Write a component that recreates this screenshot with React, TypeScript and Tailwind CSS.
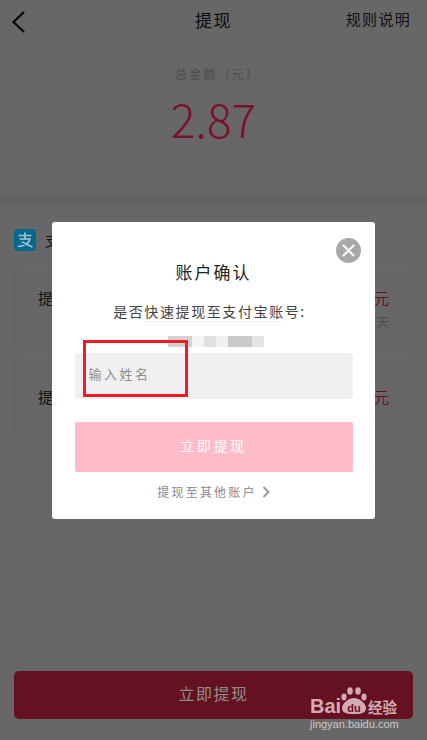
import React from "react";

const cjk = { fontFamily: '"Noto Sans CJK SC", "Noto Sans", sans-serif' };

function Card({ tall }: { tall?: boolean }) {
  return (
    <div className={`flex h-[79px] w-[398px] items-start justify-between rounded-[6px] border border-[#646464] pl-[23px] pr-[22px] ${tall ? "pt-[16px]" : "pt-[27px]"}`}>
      <span className="text-[15px] leading-[20px] text-[#111]">提现</span>
      <div className="flex flex-col items-end">
        <span className="text-[15px] leading-[20px] text-[#6b1024]">元</span>
        {tall && <span className="mt-[6px] text-[12px] leading-[16px] text-[#4a4a4a]">天</span>}
      </div>
    </div>
  );
}

export default function App() {
  return (
    <div className="relative h-[740px] w-[427px] overflow-hidden bg-[#676767]" style={cjk}>
      {/* dimmed page */}
      <div className="flex h-full flex-col">
        <header className="flex h-[44px] items-center justify-between border-b border-[#636363] pb-[4px] pl-[11px] pr-[16px]">
          <svg width="15" height="22" viewBox="0 0 15 22" fill="none" stroke="#050505" strokeWidth="2.2" className="mt-[4px]">
            <path d="M13 1 L2.5 11 L13 21" />
          </svg>
          <h1 className="absolute left-0 right-0 text-center text-[17px] font-normal tracking-[1.5px] text-[#0c0c0c]">提现</h1>
          <span className="text-[15px] tracking-[1.3px] text-[#111]">规则说明</span>
        </header>
        <section className="flex h-[150px] flex-col items-center pt-[22px]">
          <span className="pl-[8px] text-[12px] leading-[16px] tracking-[2.2px] text-[#4c4c4c]">总金额（元）</span>
          <span className="mt-[8px] text-[46px] leading-[56px] font-light text-[#7c1029]">2.87</span>
        </section>
        <div className="h-[12px] bg-[#636363]" />
        <section className="flex flex-1 flex-col pl-[14px] pt-[23px]">
          <div className="flex h-[22px] items-center gap-[9px]">
            <svg width="22" height="22" viewBox="0 0 22 22">
              <rect width="22" height="22" rx="4" fill="#05688f" />
              <path d="M4.5 6.5 H17.5 M11 3.5 V10 M5.5 10 H16 C15 13.5 12 17 4 17.5 M8 13 C11 14 14 16 18.5 18" stroke="#a9c3cf" strokeWidth="1.7" fill="none" />
            </svg>
            <span className="text-[15px] text-[#111]">支付宝</span>
          </div>
          <div className="mt-[20px] flex flex-col gap-[9px]">
            <Card tall />
            <Card />
          </div>
          <button className="mt-auto mb-[21px] flex h-[48px] w-[399px] items-center justify-center rounded-[5px] bg-[#661121] pb-[4px] text-[16px] tracking-[1.5px] text-[#8d8d8d]">
            立即提现
          </button>
        </section>
      </div>

      {/* modal */}
      <div className="absolute left-[52px] top-[222px] flex h-[297px] w-[323px] flex-col items-center rounded-[3px] bg-white px-[22px]">
        <button className="absolute right-[14px] top-[16px] flex h-[25px] w-[25px] items-center justify-center rounded-full bg-[#a8a8a8]">
          <svg width="13" height="13" viewBox="0 0 13 13" stroke="#fff" strokeWidth="2" strokeLinecap="round">
            <path d="M1.5 1.5 L11.5 11.5 M11.5 1.5 L1.5 11.5" />
          </svg>
        </button>
        <h2 className="mt-[38px] text-[17px] font-normal leading-[24px] tracking-[2px] text-[#222]">账户确认</h2>
        <p className="mr-[8px] mt-[17px] text-[14px] leading-[20px] tracking-[1.6px] text-[#444]">是否快速提现至支付宝账号:</p>
        <div className="h-px w-[135px] bg-[#ececec]" />
        <div className="ml-[4px] mt-[14px] flex h-[11px] w-[96px]">
          <span className="w-[24px] bg-[#d2d2d4]" />
          <span className="w-[12px] bg-[#f4f4f5]" />
          <span className="w-[12px] bg-[#e0e0e2]" />
          <span className="w-[12px] bg-[#f0f0f1]" />
          <span className="w-[24px] bg-[#c9c9cc]" />
          <span className="w-[12px] bg-[#e4e4e6]" />
        </div>
        <div className="mt-[6px] flex h-[46px] w-[278px] items-center rounded-[2px] bg-[#f0f0f0] pb-[4px] pl-[14px] text-[13px] tracking-[2.5px] text-[#8e8e8e]">
          输入姓名
        </div>
        <button className="mt-[23px] flex h-[50px] w-[278px] items-center justify-center rounded-[2px] bg-[#febcc9] pb-[3px] text-[14px] tracking-[2.5px] text-white">
          立即提现
        </button>
        <div className="mt-[12px] flex items-center gap-[5px] text-[12px] leading-[16px] tracking-[2.2px] text-[#888]">
          <span>提现至其他账户</span>
          <svg width="8" height="12" viewBox="0 0 8 12" fill="none" stroke="#999" strokeWidth="2">
            <path d="M1.5 1 L6.5 6 L1.5 11" />
          </svg>
        </div>
      </div>

      {/* annotation */}
      <div className="absolute left-[83px] top-[340px] h-[57px] w-[105px] border-[3px] border-[#ee1c25]" />

      {/* watermark */}
      <div className="absolute left-[310px] top-[685px]">
        <svg width="90" height="32" viewBox="0 0 90 32" className="block overflow-visible">
          <g fill="#d4abb5">
            <ellipse cx="34" cy="12" rx="2.6" ry="3.4" />
            <ellipse cx="40" cy="6" rx="2.8" ry="3.8" />
            <ellipse cx="48" cy="6" rx="2.8" ry="3.8" />
            <ellipse cx="54" cy="12" rx="2.6" ry="3.4" />
            <path d="M32 23 C32 18 39 13 44 13 C49 13 56 18 56 23 C56 27 53 29 44 29 C35 29 32 27 32 23 Z" />
          </g>
          <text x="0" y="28" fontFamily="Liberation Sans" fontWeight="700" fontSize="20" fill="#d4abb5">Bai</text>
          <text x="44" y="27" textAnchor="middle" fontFamily="Liberation Sans" fontWeight="700" fontSize="11" fill="#661121">du</text>
          <text x="58" y="27.5" fontFamily="Noto Sans CJK SC" fontWeight="700" fontSize="14.5" fill="#d4abb5">经验</text>
        </svg>
      </div>
      <div className="absolute left-[310px] top-[717px] text-[11px] leading-[14px] text-[#c9c9c9]" style={{ fontFamily: '"Liberation Sans", sans-serif' }}>
        jingyan.baidu.com
      </div>
    </div>
  );
}
